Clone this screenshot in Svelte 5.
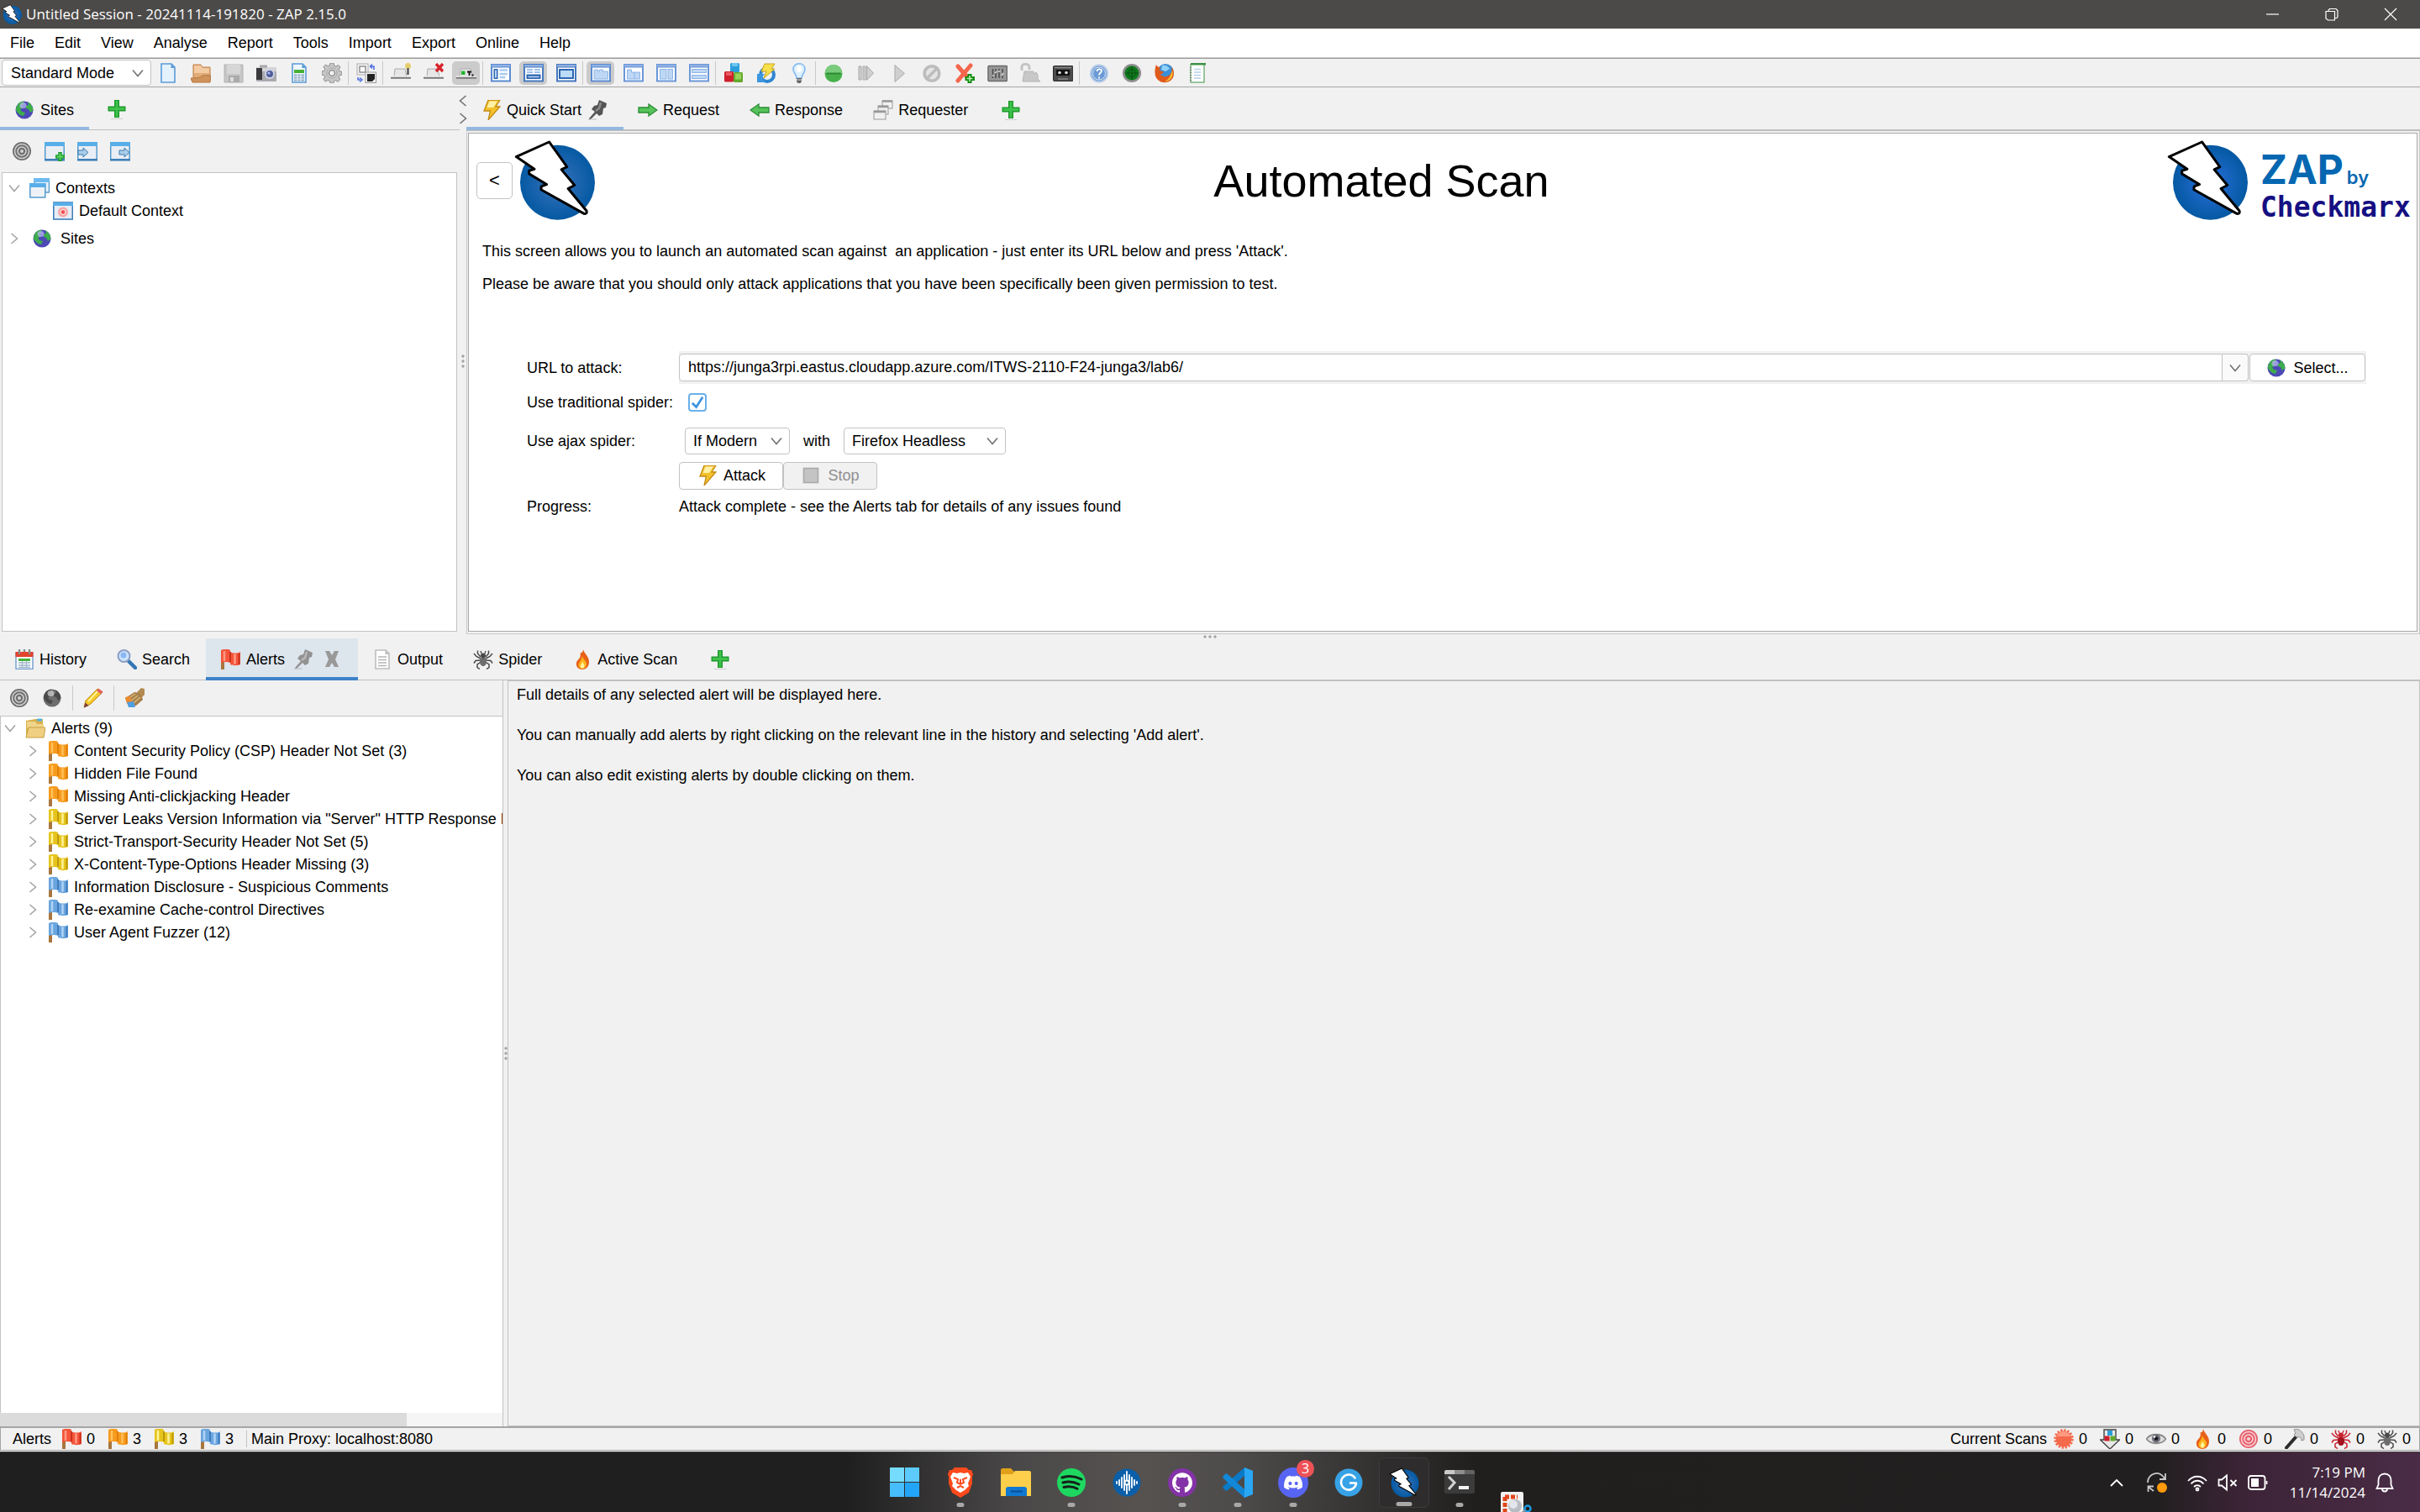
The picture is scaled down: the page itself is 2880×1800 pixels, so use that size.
<script>
  const menus = ['File', 'Edit', 'View', 'Analyse', 'Report', 'Tools', 'Import', 'Export', 'Online', 'Help'];

  const frame = (dark, inner) =>
    `<rect x="0" y="1" width="24" height="21.500" fill="${dark}"/><rect x="1" y="2" width="22" height="2.500" fill="#8fb0e4"/><rect x="2" y="5.500" width="20" height="15" fill="#fff"/>${inner}`;
  const pale = 'fill="#bdd7f5" stroke="#8db4e6"';
  const flag = (base, light, dark) =>
    `<path d="M1 12h4v12H1z" fill="#a8763e"/><path d="M1 1c4-1.500 8-1.500 11 0v2c3 2 9 2 12 0v15c-3 1.600-9 1.600-12 0v-2c-3-1.500-7-1.500-11 0z" fill="${base}"/><path d="M5 2v12M17.500 5.500v12" stroke="${light}" stroke-width="2.500" fill="none"/><path d="M12 3v12M22.500 5v13" stroke="${dark}" stroke-width="1.800" fill="none"/>`;
  const target = (a, b) =>
    `<circle cx="12" cy="12" r="11" fill="${a}"/><circle cx="12" cy="12" r="8.500" fill="none" stroke="${b}" stroke-width="1.500"/><circle cx="12" cy="12" r="5" fill="none" stroke="${b}" stroke-width="1.600"/><circle cx="12" cy="12" r="2" fill="${b}"/>`;
  const spider = (c, d) =>
    `<g fill="none" stroke="${c}" stroke-width="1.500"><path d="M9 9 5.500 5V1.500M15 9l3.500-4V1.500M9 11 4 8.500 1 5M15 11l5-2.500L23 5M9 13l-6 .5-2 3M15 13l6 .5 2 3M9.500 15 5 18v3.500l3 2M14.500 15l4.500 3v3.500l-3 2"/></g><ellipse cx="12" cy="14.500" rx="4" ry="5.500" fill="${d}"/><circle cx="12" cy="7.500" r="3" fill="${c}"/><path d="M10 5 9 2M14 5l1-3" stroke="${c}" stroke-width="1.300"/>`;
  const pin = (c, d) =>
    `<path d="M14 0l9 4-1 5-3 1-1 7-4 2-3-3-7 7-2 .5.500-2L9 14 5 11l3-4 4-1z" fill="${c}"/><path d="M16 3l-2 7-4 3" stroke="${d}" stroke-width="2.500" fill="none"/><path d="M1 23h10" stroke="#bbb"/>`;
  const globe = (sea, land, glow) =>
    `<circle cx="12" cy="12" r="10.500" fill="${sea}"/><path d="M2.500 8.500C4 4.500 7 2 10.500 1.600L12 4 9 7l1 3-3 1 2 3 4 1-2 4-4-1-4-4C1.500 12 2 10 2.500 8.500zM16 2.500c4 2 6.500 6 6.400 10L19 15l-2-4-3-1V7l3-1z" fill="${land}"/><ellipse cx="10.500" cy="6.500" rx="4" ry="3.500" fill="${glow}" opacity=".75"/>`;
  const doc = (edge, fill) =>
    `<path d="M4 1h12l4 4v18H4z" fill="${fill}" stroke="${edge}" stroke-width="1.600"/><path d="M15.500 1v5H20" fill="${edge}"/>`;
  const hat = (extra) =>
    `<path d="M5 7h12l2 10H4z" fill="#e6e6e6" stroke="#aaa"/><path d="M0 17.500h24" stroke="#777" stroke-width="2.500"/><path d="M0 16h24" stroke="#eee" stroke-width="1.500"/>${extra}`;
  const win = (extra) =>
    `<rect x=".7" y="2.500" width="22.500" height="20" fill="#e9eef5" stroke="#4b94c9" stroke-width="1.400"/><rect y="1" width="24" height="5" fill="#58aee8"/><rect y="21" width="24" height="2.500" fill="#3f80b8"/>${extra}`;
  const bolt = `<path d="M9 0h14l-5 8h5L9 24l2.500-11H4L6 8z" fill="#f3c22b" stroke="#c58a17" stroke-width="1.300"/><path d="M10.500 1.500h9.500L15 9H7.500z" fill="#fff2a8"/>`;
  const flame = `<path d="M13 0c1 5 7 8 7 15 0 6-4 9-8 9s-8-3-7-8c.5-3 3-4 4-6 1-2 1-4 .5-6C11 5 13 3 13 0z" fill="#e8611a"/><path d="M12 7c0 5 5 6 5 10 0 4-2.500 6-5 6s-5-2-4.500-5c.5-2.500 4-5 4.500-11z" fill="#ffb31c"/><path d="M12.500 14c0 3 2 3 2 5.500 0 2-1 3-2.500 3s-2.500-1.500-2-3.500c.3-1.500 2-2.500 2.500-5z" fill="#fff5a0"/>`;
  const cubes = `<rect x="8" y="0" width="11" height="11" rx="1.500" fill="#2b9fdb"/><rect x="10" y="0" width="7" height="4" fill="#6cc5f0"/><rect x="1" y="10" width="11" height="12.500" rx="1.500" fill="#cf1f2c"/><rect x="3" y="11" width="7" height="4" fill="#ea5a62"/><rect x="12" y="11" width="11" height="12" rx="1.500" fill="#63a92c"/><rect x="14" y="12.500" width="7" height="7" fill="#9ad35c"/>`;

  const icons = {
    doc: doc('#5c9bd5', '#e4f2ff'),
    folder: `<path d="M3 2h9l2 3h9v14H3z" fill="#e2ab77" stroke="#c08049"/><path d="M4 3h8l2 3h8v6H4z" fill="#f3cba3"/><path d="M0 18c5 0 11 0 14-3 3-.5 6-.5 10 0l-1 8H2z" fill="#cf945c" stroke="#b4763f"/>`,
    save: `<path d="M1 2h22v21H1z" fill="#c6c6c6" stroke="#b2b2b2"/><rect x="4" y="2" width="16" height="11" fill="#d6d6d6"/><rect x="6" y="15" width="13" height="8" fill="#aaa"/><rect x="8" y="17" width="4" height="5" fill="#ddd"/>`,
    camera: `<rect x="0" y="5" width="24" height="17" rx="1" fill="#a9a9b0"/><path d="M0 5h24v5H0z" fill="#d4d4d8"/><path d="M0 6h7v14H0z" fill="#3a3a3e"/><rect x="4" y="2.500" width="9" height="3" fill="#a8a8a8"/><circle cx="16" cy="13" r="6" fill="#d0d3e6"/><circle cx="16" cy="13" r="4" fill="#4f5c99"/><circle cx="15" cy="12" r="1.600" fill="#aab8ef"/>`,
    report: doc('#5c9bd5', '#eef6ff') + `<rect x="6" y="8" width="12" height="4" fill="#45b035"/><path d="M6 14.500h12M6 17.500h12M6 20.500h12" stroke="#8fa9c0" stroke-width="1.800"/><path d="M10 12v10M14 12v10" stroke="#eef6ff"/>`,
    gear: `<path d="M10 0h4l.8 3.200 2 .9L19.700 2.400 22 5l-1.800 2.800.9 2L24 10.500v3.500l-3 .8-.9 2 1.700 3L19 22.300l-2.600-1.700-2 .9L14 24h-4l-.8-2.700-2-.9-2.900 1.700L2 19.500l1.700-2.700-.9-2L0 14v-4l2.800-.8.9-2L2 4.500 4.500 2l2.700 1.700 2-.9z" fill="#c6c6c6" stroke="#8c8c8c"/><circle cx="12" cy="12" r="6" fill="#dcdcdc" stroke="#a0a0a0"/><circle cx="12" cy="12" r="3.500" fill="#f1f1f1" stroke="#8c8c8c" stroke-width="1.600"/>`,
    persist: `<rect x="1" y="1" width="13" height="13" fill="#f7f7f7" stroke="#aaa"/><rect x="4" y="4" width="7" height="7" fill="#fff" stroke="#888" stroke-width="1.400"/><rect x="11" y="11" width="12.500" height="12.500" fill="#f4f4f4" stroke="#999"/><path d="M13 13h9v6l-3 3h-6z" fill="#222"/><path d="M17 4h4v4M19 1.500l-2.500 2.500L19 6.500M1.500 20H5M4 17.500l3 2.500-3 2.500M2 17v3" stroke="#4a6be0" stroke-width="1.500" fill="none"/>`,
    hatpin: hat(`<circle cx="20.500" cy="3.500" r="3.500" fill="#e8cd6b"/><path d="M20.500 6v8" stroke="#555" stroke-width="2.500"/>`),
    hatx: hat(`<path d="M15 1l8 9M23 1l-8 9" stroke="#d8242c" stroke-width="3.400"/>`),
    hatgreen: hat(`<rect x="6" y="9.500" width="4.500" height="4.500" fill="#22b52e"/><path d="M13 10.500h5M15.500 10.500V15M18.500 14.500h2" stroke="#111" stroke-width="1.800"/>`),
    lay1: frame('#5b8bd0', `<rect x="3.500" y="7" width="5" height="12" fill="#2f67b1"/><rect x="5" y="8.500" width="2" height="9" fill="#b9d7f5"/><path d="M10.500 8.500h9.500M10.500 13h9.500M10.500 17h7" stroke="#a8cbef" stroke-width="2.500"/>`),
    lay2: frame('#4678bf', `<path d="M4 8h7M13 8h7M4 11h7M13 11h7" stroke="#9fc3ec" stroke-width="2"/><rect x="3.500" y="13.500" width="17" height="5.500" fill="#2f67b1"/><path d="M5.500 16.500h13" stroke="#b9d7f5" stroke-width="1.500"/>`),
    lay3: frame('#4678bf', `<rect x="4" y="8" width="16" height="10" fill="#bcdcf8" stroke="#2f67b1" stroke-width="2"/>`),
    tab1: frame('#5b8bd0', `<path d="M4 8h4.500v2h2V8h4v2h6v9H4z" ${pale}/>`),
    tab2: frame('#6a97d8', `<path d="M4.500 8h5v3h10v8h-15z" ${pale}/><path d="M13 11v8" stroke="#8db4e6"/>`),
    tab3: frame('#6a97d8', `<rect x="4.500" y="7.500" width="7.500" height="11.500" ${pale}/><rect x="14" y="7.500" width="5.500" height="11.500" ${pale}/>`),
    tab4: frame('#6a97d8', `<rect x="3.500" y="7.500" width="17" height="4" ${pale}/><rect x="3.500" y="14.500" width="17" height="4" ${pale}/>`),
    cubes,
    update: `<circle cx="13" cy="14" r="8" fill="none" stroke="#2f86d2" stroke-width="4"/><path d="M1 13h9l-3 4 3 6H1z" fill="#3c97e0"/><path d="M10 1h12l-4 6h4L9 18l3-8H6z" fill="#f7e04a" stroke="#c7a21e"/>`,
    bulb: `<path d="M12 .8c4.500 0 7 3 7 6.700 0 4.500-4 5.500-4 10.500H9c0-5-4-6-4-10.500C5 3.800 7.500.8 12 .8z" fill="#dff0ff" stroke="#7fb7f0" stroke-width="1.600"/><ellipse cx="12" cy="7" rx="3" ry="4" fill="#fff"/><path d="M9 18h6v4l-1.500 2h-3L9 22z" fill="#666"/><path d="M9 20h6" stroke="#ddd"/>`,
    green: `<circle cx="12" cy="12.500" r="10.500" fill="#47b04a"/><path d="M2 12a10 10 0 0 1 20 0z" fill="#7acb7c"/><path d="M3.500 12.500h17" stroke="#2d8a35" stroke-width="2"/>`,
    step: `<path d="M3 4h3v16H3zM8 4h3v16H8zM12.500 3.500l8 8.500-8 8.500z" fill="#cfcfcf" stroke="#a9a9a9"/>`,
    play: `<path d="M7 2.500 18.500 12.500 7 22.500z" fill="#cfcfcf" stroke="#a9a9a9"/>`,
    block: `<circle cx="12" cy="12.500" r="8.800" fill="#e4e4e4" stroke="#bcbcbc" stroke-width="3.600"/><path d="M6 18.500l12-12" stroke="#bcbcbc" stroke-width="3.400"/>`,
    crossadd: `<path d="M4 4l14 16M19 3 4 21" stroke="#f4664c" stroke-width="5" stroke-linecap="round"/><path d="M18 13v11M12.500 18.500H24" stroke="#0e8c0e" stroke-width="5"/><path d="M18 15v7M14.500 18.500h7" stroke="#b6efb0" stroke-width="1.600"/>`,
    mixer: `<rect x="1" y="3.500" width="22.500" height="18" rx="1" fill="#989898" stroke="#6a6a6a" stroke-width="1.500"/><path d="M6.500 7v11M10 7v11M14 7v11M18 7v11" stroke="#4a4a4a" stroke-width="1.500"/><path d="M6 15h2M9 12l2-2M12.500 10h3M17 15l2-3" stroke="#ddd" stroke-width="1.600"/>`,
    lock: `<path d="M2 9V5c0-5 9-5 9 0v3" fill="none" stroke="#c4c4c4" stroke-width="3"/><path d="M5 10h11v3l3-2 2 3v5l3 3H3z" fill="#c8c8c8" stroke="#b5b5b5"/>`,
    tape: `<rect x=".5" y="3.500" width="23.500" height="18" rx="1" fill="#4b4b4b" stroke="#2c2c2c"/><rect x="4" y="8" width="16" height="7" fill="#111"/><circle cx="8" cy="11.500" r="1.800" fill="#ddd"/><circle cx="16" cy="11.500" r="1.800" fill="#ddd"/><path d="M2 5.500h20M6 19h12" stroke="#888" stroke-width="1.500"/>`,
    help: `<circle cx="12" cy="12.500" r="10" fill="#6c9ad4" stroke="#b5cbe8" stroke-width="2"/><circle cx="12" cy="12.500" r="7.500" fill="#6b9ad6" stroke="#dbe8f8"/><path d="M9.500 10c0-3.500 5.500-3.500 5.500-.5 0 2-3 2-3 5M12 16.500v2" stroke="#fff" stroke-width="1.800" fill="none"/>`,
    radar: `<circle cx="12" cy="12" r="9.800" fill="#0e7a1c" stroke="#8f8f8f" stroke-width="2.600"/><path d="M12 4v16M4 12h16" stroke="#0a4f12"/><circle cx="12" cy="12" r="4.500" fill="none" stroke="#0a4f12"/>`,
    firefox: `<circle cx="13" cy="10.500" r="9.500" fill="#3a8fd9"/><path d="M9 3c4-1 8 1 9 4l-5 3-5-2z" fill="#8fd0f7"/><path d="M2 2c1 2 2 3 5 3l-1 3c1 2 3 2 5 2-1 3-3 3-4 3 2 4 8 4 11 1 3-3 3-7 2-10 4 5 4 12 0 16-5 5-13 4-17-1C-.5 15 0 7 2 2z" fill="#df5b1c"/><path d="M21 9c2 6-2 13-9 13 5-2 7-6 9-13z" fill="#f8c838"/>`,
    note: `<rect x="4" y="1.500" width="16" height="21.500" fill="#fff" stroke="#3c9143"/><rect x="4" y="0" width="18" height="2.500" fill="#3c9143"/><path d="M8 7.500h8M8 11h8M8 14.500h8M8 18h8" stroke="#b6cfe8" stroke-width="1.500"/><path d="M4 5v16" stroke="#777" stroke-width="2" stroke-dasharray="1 2"/>`,
    globe: globe('#4d49b5', '#3cae4a', '#b7b5f2'),
    globegray: globe('#6e6e6e', '#4a4a4a', '#cfcfcf'),
    plus: `<path d="M12 1v21M1.500 11.500h21" stroke="#1e9a2c" stroke-width="6"/><path d="M12 2v19M3 11.500h18" stroke="#3fc24c" stroke-width="3"/><path d="M5 23.500h14" stroke="#cfcfcf"/>`,
    bolt,
    pin: pin('#555', '#8b8b8b'),
    pinlight: pin('#929292', '#b9b9b9'),
    close: `<path d="M4 2h5l3 5 3-5h5l-4 10 4 9h-5l-3-5-3 5H4l4-9z" fill="#999"/>`,
    right: `<path d="M1 9h12V5l10 7-10 7v-4H1z" fill="#56c35b" stroke="#2a8d33" stroke-width="1.300"/>`,
    left: `<path d="M23 9H11V5L1 12l10 7v-4h12z" fill="#56c35b" stroke="#2a8d33" stroke-width="1.300"/>`,
    stack: `<g fill="#f0f0f0" stroke="#9a9a9a"><rect x="11" y="1" width="12" height="9"/><rect x="6" y="7" width="12" height="10"/><rect x="1" y="13" width="14" height="10"/></g><path d="M11 1.500h12M6 8h12M1 14h14" stroke="#999" stroke-width="2.400"/>`,
    targetgray: target('#6f6f6f', '#d2d2d2'),
    targetred: target('#e4606c', '#fcd5d8'),
    winadd: win(`<path d="M18.500 13v11M13 18.500h11" stroke="#1a9a2a" stroke-width="4.500"/><path d="M18.500 14.500v8M14.500 18.500h8" stroke="#5fd565" stroke-width="1.800"/>`),
    winin: win(`<path d="M1 11h6V8l6 5.500L7 19v-3H1z" fill="#a9cdea" stroke="#3c79aa"/>`),
    winout: win(`<path d="M11 11h6V8l6 5.500-6 5.500v-3h-6z" fill="#a9cdea" stroke="#3c79aa"/>`),
    contexts: `<rect x="6" y="1" width="17.500" height="16" fill="#e8f1fa" stroke="#4b94c9" stroke-width="1.400"/><rect x="5.500" y="0" width="18.500" height="5" fill="#6cbaf0"/><rect x=".8" y="7" width="18" height="16" fill="#eef2f7" stroke="#4b94c9" stroke-width="1.400"/><rect y="6" width="19.500" height="5" fill="#58aee8"/>`,
    context: `<rect x=".8" y="2" width="22.500" height="20" fill="#e8edf5" stroke="#3f7fb8" stroke-width="1.600"/><rect y="2" width="24" height="4" fill="#58aee8"/><circle cx="12" cy="13.500" r="6" fill="#f8a6a6"/><circle cx="12" cy="13.500" r="3" fill="#ef5555" stroke="#fff"/>`,
    history: `<rect x="2" y="4" width="20" height="19.500" fill="#fbfdff" stroke="#6f9ccb" stroke-width="1.400"/><rect x="1.500" y="3" width="21" height="6" fill="#e3432d"/><path d="M6 0v6M12 0v3M18 0v6" stroke="#8a8a8a" stroke-width="2.400"/><rect x="5" y="11" width="14" height="3" fill="#46b13a"/><path d="M5 16h14M5 19h14M5 21.500h14" stroke="#9fb4cb" stroke-width="1.400"/><path d="M9.500 14v8M14.500 14v8" stroke="#9fb4cb"/>`,
    search: `<path d="M13 13l9 9" stroke="#3577b5" stroke-width="4.500" stroke-linecap="round"/><circle cx="8.500" cy="8" r="7" fill="#cfe4fb" stroke="#8c9fc4" stroke-width="2"/><circle cx="8" cy="7" r="3.500" fill="#8ab8f5"/>`,
    output: doc('#bdbdbd', '#fff') + `<path d="M7 9h10M7 12.500h10M7 16h10M7 19.500h10" stroke="#b5b5b5" stroke-width="1.400"/>`,
    spider: spider('#4a4a4a', '#6d6d6d'),
    spiderred: spider('#c9202e', '#a3121f'),
    flame,
    pencil: `<path d="M1 23l2-8L17 1l6 4L9 19z" fill="#f5c927" stroke="#b98a1b"/><path d="M6 16 18 3" stroke="#fff09a" stroke-width="2"/><path d="M18 .5l5.500 4-2 3-5.500-4z" fill="#e06060"/><path d="M1 23.500l1.500-6 4 3.500z" fill="#7a3b3b"/>`,
    broom: `<path d="M15 5 20 0l4 1v7l-5 5z" fill="#b28a52"/><path d="M1 12l11-7c5 0 9 4 10 9l-8 7-9 1z" fill="#a78049"/><path d="M4 13l9-6M7 16l9-7M11 18l8-7" stroke="#d9b97c" stroke-width="1.500"/><path d="M1 11l6-1 2 7-6 2z" fill="#f08a2c"/><path d="M3 17l8-1 2 7H5z" fill="#4f9de0"/>`,
    dir: `<path d="M1 3l11-2h9v21H1z" fill="#d8b04a"/><path d="M14 .5h6v3h-6z" fill="#55b0e8"/><path d="M2 4h10l2 3h8v5H2z" fill="#f0d48a"/><path d="M1 23 4 11h20l-2 12z" fill="#efd083" stroke="#c79f3e"/>`,
    red: flag('#f4543a', '#ff9a85', '#c5301c'),
    orange: flag('#f79b1e', '#ffc15c', '#dd7d08'),
    yellow: flag('#e6c41d', '#fff39a', '#b8940b'),
    blue: flag('#6aa5df', '#b1d4f5', '#3b78b8'),
    burst: `<circle cx="12" cy="12" r="9.500" fill="#f4694b"/><circle cx="12" cy="12" r="10" fill="none" stroke="#f4694b" stroke-width="3.500" stroke-dasharray="2.300 1.620"/><path d="M4 9a8.500 8.500 0 0 1 16 0z" fill="#ff9a80"/>`,
    cubedown: `<path d="M5 1h14v12h4.500L12 24 .5 13H5z" fill="#e8e8e8" stroke="#444" stroke-width="1.400"/><rect x="9" y="2" width="6" height="6" fill="#2b9fdb"/><rect x="5.500" y="8.500" width="6" height="6" fill="#cf1f2c"/><rect x="12.500" y="8.500" width="6" height="6" fill="#63a92c"/>`,
    eye: `<path d="M.5 12C5 5 19 5 23.500 12 19 19 5 19 .5 12z" fill="#ddd" stroke="#8a8a8a" stroke-width="1.800"/><circle cx="12" cy="11.500" r="5" fill="#6b6b78"/><circle cx="12" cy="11.500" r="2.300" fill="#16161c"/><circle cx="10" cy="9.500" r="1.300" fill="#fff"/>`,
    hammer: `<path d="M13 10 2 22.500" stroke="#2c2c2c" stroke-width="4" stroke-linecap="round"/><path d="M11 1c5-2 9 1 12 7v5l-3 1c0-4-3-5-6-4l-3-3 2-2z" fill="#cfcfcf" stroke="#8f8f8f"/>`,
    stop: `<rect x="3.500" y="3.500" width="17" height="17" fill="#c4c4c4" stroke="#aaa" stroke-width="1.600"/>`,
  };

  const toolbar = [
    [['doc', 'New Session'], ['folder', 'Open Session'], ['save', 'Persist Session'], ['camera', 'Snapshot Session'], ['report', 'Generate Report'], ['gear', 'Options']],
    [['persist', 'Session Properties']],
    [['hatpin', 'Show Tab Names'], ['hatx', 'Hide Unpinned Tabs'], ['hatgreen', 'Show Tab Icons', true]],
    [['lay1', 'Expand Sites'], ['lay2', 'Expand Information', true], ['lay3', 'Full Layout']],
    [['tab1', 'Tabs Layout', true], ['tab2', 'Tabs Layout Two'], ['tab3', 'Side by Side'], ['tab4', 'Above']],
    [['cubes', 'Manage Add-ons'], ['update', 'Check for Updates'], ['bulb', 'Show Tips']],
    [['green', 'Set Break'], ['step', 'Step'], ['play', 'Continue'], ['block', 'Drop'], ['crossadd', 'Add Break Point'], ['mixer', 'Scan Policy'], ['lock', 'Forced User Mode'], ['tape', 'Record Script']],
    [['help', 'Help'], ['radar', 'HUD'], ['firefox', 'Open Browser'], ['note', 'Notes']],
  ];

  const alerts = [
    ['orange', 'Content Security Policy (CSP) Header Not Set (3)'],
    ['orange', 'Hidden File Found'],
    ['orange', 'Missing Anti-clickjacking Header'],
    ['yellow', 'Server Leaks Version Information via "Server" HTTP Response Header Field (3)'],
    ['yellow', 'Strict-Transport-Security Header Not Set (5)'],
    ['yellow', 'X-Content-Type-Options Header Missing (3)'],
    ['blue', 'Information Disclosure - Suspicious Comments'],
    ['blue', 'Re-examine Cache-control Directives'],
    ['blue', 'User Agent Fuzzer (12)'],
  ];

  const alertCounts = [['red', 0], ['orange', 3], ['yellow', 3], ['blue', 3]];
  const scans = ['burst', 'cubedown', 'eye', 'flame', 'targetred', 'hammer', 'spiderred', 'spider'];

  const apps = [
    { name: 'Start', state: '', art: `<path d="M0 0h17v17H0z" fill="#76dcfd"/><path d="M18 0h17v17H18z" fill="#5ccbfc"/><path d="M0 18h17v17H0z" fill="#47bdfb"/><path d="M18 18h17v17H18z" fill="#23a5f7"/>` },
    { name: 'Brave', state: 'open', art: `<path d="M11 0h14l3 3 3 0 2 5-1 3 0 8-4 11-10 6-10-6-4-11 0-8-1-3 2-5 3 0z" fill="#fb4a1c"/><path d="M9 6l5 1 4-1 4 1 5-1 3 5-3 8 1 3-5 5-5 3-5-3-5-5 1-3-3-8z" fill="#fff"/><path d="M10 12l5 2-1 4 4 2 4-2-1-4 5-2M14 24l4-2 4 2M18 14v6" stroke="#fb4a1c" stroke-width="2" fill="none"/>` },
    { name: 'File Explorer', state: '', art: `<path d="M0 3c0-1 1-2 2-2h10l4 4v6H0z" fill="#e0a01a"/><path d="M0 8h14l3-4h17c1 0 2 1 2 2v28H0z" fill="#fdcf4b"/><path d="M6 34V26c0-2 1-3 3-3h19c2 0 3 1 3 3v8z" fill="#0f78d0"/><path d="M12 28.500h14" stroke="#0a4f94" stroke-width="2"/>` },
    { name: 'Spotify', state: 'open', art: `<circle cx="18" cy="18" r="17" fill="#1ed760"/><path d="M7 12c8-2.500 16-1.500 23 2M8 18c7-2 13-1.200 19 2M9 23.500c6-1.500 11-1 16 1.800" fill="none" stroke="#14201a" stroke-width="3" stroke-linecap="round"/>` },
    { name: 'Podcasts', state: '', art: `<circle cx="18" cy="18" r="16.500" fill="#0a5fa8"/><path d="M6 17v2M9 15v6M12 12v12M15 9v18M18 5v26M21 9v18M24 12v12M27 15v6M30 17v2" stroke="#fff" stroke-width="1.800" stroke-linecap="round"/><circle cx="18" cy="18" r="3.500" fill="#fff"/><circle cx="18" cy="18" r="1.500" fill="#0a5fa8"/>` },
    { name: 'GitHub Desktop', state: 'open', art: `<circle cx="18" cy="18" r="17" fill="#8432a8"/><g transform="translate(6 6)"><path fill="#fff" d="M12 .297c-6.630 0-12 5.373-12 12 0 5.303 3.438 9.800 8.205 11.385.6.113.82-.258.82-.577 0-.285-.01-1.040-.015-2.040-3.338.724-4.042-1.610-4.042-1.610C4.422 18.070 3.633 17.700 3.633 17.700c-1.087-.744.084-.729.084-.729 1.205.084 1.838 1.236 1.838 1.236 1.070 1.835 2.809 1.305 3.495.998.108-.776.417-1.305.76-1.605-2.665-.3-5.466-1.332-5.466-5.930 0-1.310.465-2.380 1.235-3.220-.135-.303-.54-1.523.105-3.176 0 0 1.005-.322 3.300 1.230.96-.267 1.980-.399 3-.405 1.020.006 2.040.138 3 .405 2.280-1.552 3.285-1.230 3.285-1.230.645 1.653.24 2.873.12 3.176.765.840 1.230 1.910 1.230 3.220 0 4.610-2.805 5.625-5.475 5.920.42.360.81 1.096.81 2.220 0 1.606-.015 2.896-.015 3.286 0 .315.210.690.825.570C20.565 22.092 24 17.592 24 12.297c0-6.627-5.373-12-12-12"/></g>` },
    { name: 'Visual Studio Code', state: 'open', art: `<path d="M26 0 1 22c-1 1-1 2 0 3l2 2c1 1 2 1 3 0L26 10z" fill="#0a7ac6"/><path d="M26 36 1 13c-1-1-1-2 0-3l2-2c1-1 2-1 3 0l20 18z" fill="#1289d8"/><path d="M26 0l10 4v28l-10 4z" fill="#2aa7f4"/>` },
    { name: 'Discord', state: 'open', badge: '3', art: `<circle cx="18" cy="18" r="18" fill="#5865f2"/><g transform="translate(7 7)"><path fill="#fff" transform="scale(.92)" d="M20.317 4.370a19.791 19.791 0 0 0-4.885-1.515.074.074 0 0 0-.079.037c-.211.375-.445.865-.608 1.250-1.845-.276-3.680-.276-5.487 0-.164-.393-.406-.874-.618-1.250a.077.077 0 0 0-.079-.037 19.736 19.736 0 0 0-4.885 1.515.07.07 0 0 0-.032.028C.533 9.046-.319 13.580.099 18.058a.082.082 0 0 0 .031.056c2.053 1.508 4.041 2.423 5.993 3.029a.078.078 0 0 0 .084-.028c.462-.63.873-1.295 1.226-1.994a.076.076 0 0 0-.042-.106c-.653-.248-1.274-.55-1.872-.892l.364-.419a.074.074 0 0 1 .078-.011c3.928 1.793 8.180 1.793 12.061 0l.451.302c-.598.35-1.220.645-1.880.999.36.698.772 1.363 1.225 1.993 1.961-.578 4.034-1.493 6.087-3.001.5-5.177-.838-9.674-3.549-13.660zM8.020 15.331c-1.183 0-2.157-1.086-2.157-2.419 0-1.333.956-2.419 2.157-2.419 1.211 0 2.176 1.095 2.157 2.419 0 1.333-.956 2.419-2.157 2.419zm7.975 0c-1.183 0-2.157-1.086-2.157-2.419 0-1.333.955-2.419 2.157-2.419 1.211 0 2.176 1.095 2.157 2.419 0 1.333-.946 2.419-2.157 2.419z"/></g>` },
    { name: 'Grammarly', state: '', art: `<circle cx="18" cy="18" r="16.500" fill="#37a3e6"/><path d="M25.500 12.500A9 9 0 1 0 27 18.500h-7" fill="none" stroke="#fff" stroke-width="2.600" stroke-linecap="round" stroke-linejoin="round"/>` },
    { name: 'ZAP', state: 'active', art: '' },
    { name: 'Terminal', state: 'open', art: `<rect y="3" width="36" height="28" rx="2" fill="#3b3b3b"/><path d="M2 3h10v5H0V5c0-1 1-2 2-2z" fill="#c9c9c9"/><path d="M12 3h12v5H12z" fill="#8f8f8f"/><path d="M24 3h10c1 0 2 1 2 2v3H24z" fill="#626262"/><path d="M5 11l7 7-7 8" fill="none" stroke="#d2d2d2" stroke-width="3"/><rect x="17" y="22" width="12" height="4" fill="#f4f4f4"/>` },
    { name: 'Snipping Tool', state: 'low', art: `<rect x="1" y="0" width="27" height="30" rx="2" fill="#f1f1f1"/><path d="M6 6v18M6 6h15" fill="none" stroke="#e0461b" stroke-width="5" stroke-dasharray="5 2"/><circle cx="18" cy="17" r="8" fill="#b9bcc2"/><circle cx="16" cy="15" r="5" fill="#e3e6ea"/><circle cx="33" cy="20" r="3.500" fill="none" stroke="#1a9be0" stroke-width="2.500"/><path d="M30 22l-5 4" stroke="#8b98a4" stroke-width="2.500"/>` },
  ];

  let url = $state('https://junga3rpi.eastus.cloudapp.azure.com/ITWS-2110-F24-junga3/lab6/');
  let traditional = $state(true);
</script>

{#snippet icon(name)}
  <svg class="icon" viewBox="0 0 24 24" aria-hidden="true">{@html icons[name]}</svg>
{/snippet}

{#snippet zap(kind)}
  <svg class="zap {kind}" viewBox="178 80 292 292" aria-hidden="true">
    <defs>
      <radialGradient id="zap-{kind}"><stop offset="0" stop-color={kind === 'brand' ? '#2a6fdc' : '#3a74bd'} /><stop offset="1" stop-color="#0459a2" /></radialGradient>
    </defs>
    <circle cx="333" cy="234" r="134" fill="url(#zap-{kind})" />
    <path d="M303 89 367 178 347 188 394 244 371 256 437 336Q440 348 428 346L274 260 275 248 294 241 231 203V192L250 186 185 142Z" fill="#fff" stroke="#000" stroke-width="9" stroke-linejoin="round" />
  </svg>
{/snippet}

{#snippet chevron(dir)}
  <svg class="chevron {dir}" viewBox="0 0 16 16" aria-hidden="true"><path d="M2 4.500 8 11.500 14 4.500" /></svg>
{/snippet}

<div class="screen">
  <header class="titlebar">
    {@render zap('tiny')}
    <span class="caption">Untitled Session - 20241114-191820 - ZAP 2.15.0</span>
    <button aria-label="Minimize"><svg viewBox="0 0 16 16"><path d="M0 8h15" /></svg></button>
    <button aria-label="Restore"><svg viewBox="0 0 16 16"><path d="M1 4.500h10.500V15H3.500L1 13zM4 4V3l1.500-1.500H13L15 3.500V11l-1 1.500h-2" /></svg></button>
    <button aria-label="Close"><svg viewBox="0 0 16 16"><path d="M1 1l14 14M15 1 1 15" /></svg></button>
  </header>

  <nav class="menubar">
    {#each menus as menu}<button>{menu}</button>{/each}
  </nav>

  <div class="toolbar" role="toolbar" aria-label="Main toolbar">
    <div class="combo mode">
      <select aria-label="Mode"><option>Standard Mode</option></select>
      {@render chevron('down')}
    </div>
    {#each toolbar as group}
      <div class="group">
        {#each group as [name, label, on]}
          <button class:on aria-label={label}>{@render icon(name)}</button>
        {/each}
      </div>
    {/each}
  </div>

  <section class="upper">
    <div class="sites">
      <div class="tabs">
        <button class="tab selected">{@render icon('globe')}Sites</button>
        <button class="tab add" aria-label="Add tab">{@render icon('plus')}</button>
      </div>
      <div class="tools">
        <button aria-label="Show only in scope">{@render icon('targetgray')}</button>
        <button aria-label="New context">{@render icon('winadd')}</button>
        <button aria-label="Import context">{@render icon('winin')}</button>
        <button aria-label="Export context">{@render icon('winout')}</button>
      </div>
      <ul class="tree">
        <li>{@render chevron('down')}{@render icon('contexts')}Contexts</li>
        <li class="child">{@render icon('context')}Default Context</li>
        <li class="site">{@render chevron('right')}{@render icon('globe')}Sites</li>
      </ul>
    </div>

    <div class="splitter">
      <div class="arrows">{@render chevron('left')}{@render chevron('right')}</div>
      <span class="grip"></span>
    </div>

    <div class="work">
      <div class="tabs">
        <button class="tab selected">{@render icon('bolt')}Quick Start{@render icon('pin')}</button>
        <button class="tab">{@render icon('right')}Request</button>
        <button class="tab">{@render icon('left')}Response</button>
        <button class="tab">{@render icon('stack')}Requester</button>
        <button class="tab add" aria-label="Add tab">{@render icon('plus')}</button>
      </div>
      <div class="panel">
        <main class="quick">
          <div class="banner">
            <button class="back" aria-label="Back">&lt;</button>
            {@render zap('plain')}
            <h1>Automated Scan</h1>
            {@render zap('brand')}
            <div class="brandname">
              <span class="zapword">ZAP<small>by</small></span>
              <span class="company">Checkmarx</span>
            </div>
          </div>
          <p>This screen allows you to launch an automated scan against&nbsp; an application - just enter its URL below and press 'Attack'.</p>
          <p>Please be aware that you should only attack applications that you have been specifically been given permission to test.</p>

          <form class="form" onsubmit={(e) => e.preventDefault()}>
            <label for="url">URL to attack:</label>
            <div class="urlrow">
              <input id="url" type="text" bind:value={url} />
              <button type="button" class="drop" aria-label="URL history">{@render chevron('down')}</button>
              <button type="button" class="btn select">{@render icon('globe')}Select...</button>
            </div>

            <label for="traditional">Use traditional spider:</label>
            <div class="check">
              <input id="traditional" type="checkbox" bind:checked={traditional} />
              {#if traditional}<svg viewBox="0 0 16 16" aria-hidden="true"><path d="M3.500 8.500 7 12 12.500 3.500" /></svg>{/if}
            </div>

            <label for="ajax">Use ajax spider:</label>
            <div class="ajax">
              <div class="combo modern"><select id="ajax"><option>If Modern</option></select>{@render chevron('down')}</div>
              <label for="browser">with</label>
              <div class="combo browser"><select id="browser"><option>Firefox Headless</option></select>{@render chevron('down')}</div>
            </div>

            <div class="actions">
              <button type="submit" class="btn attack">{@render icon('bolt')}Attack</button>
              <button type="button" class="btn halt" disabled>{@render icon('stop')}Stop</button>
            </div>

            <span>Progress:</span>
            <output>Attack complete - see the Alerts tab for details of any issues found</output>
          </form>
        </main>
      </div>
    </div>
  </section>

  <div class="hsplit"><span class="grip flat"></span></div>

  <section class="lower">
    <div class="tabs info">
      <button class="tab">{@render icon('history')}History</button>
      <button class="tab">{@render icon('search')}Search</button>
      <button class="tab focused">{@render icon('red')}Alerts{@render icon('pinlight')}{@render icon('close')}</button>
      <button class="tab">{@render icon('output')}Output</button>
      <button class="tab">{@render icon('spider')}Spider</button>
      <button class="tab">{@render icon('flame')}Active Scan</button>
      <button class="tab add" aria-label="Add tab">{@render icon('plus')}</button>
    </div>
    <div class="alertpane">
      <div class="alertlist">
        <div class="tools">
          <button aria-label="Only in scope">{@render icon('targetgray')}</button>
          <button aria-label="Link with sites">{@render icon('globegray')}</button>
          <i></i>
          <button aria-label="Edit alert">{@render icon('pencil')}</button>
          <i></i>
          <button aria-label="Delete all alerts">{@render icon('broom')}</button>
        </div>
        <ul class="tree">
          <li>{@render chevron('down')}{@render icon('dir')}Alerts (9)</li>
          {#each alerts as [risk, label]}
            <li class="child">{@render chevron('right')}{@render icon(risk)}{label}</li>
          {/each}
        </ul>
        <div class="scroll"><span></span></div>
      </div>
      <div class="splitter"><span class="grip"></span></div>
      <div class="details">
        <p>Full details of any selected alert will be displayed here.</p>
        <p>You can manually add alerts by right clicking on the relevant line in the history and selecting 'Add alert'.</p>
        <p>You can also edit existing alerts by double clicking on them.</p>
      </div>
    </div>
  </section>

  <footer class="status">
    <span class="lead">Alerts</span>
    {#each alertCounts as [risk, count]}<span class="count">{@render icon(risk)}{count}</span>{/each}
    <span class="proxy">Main Proxy: localhost:8080</span>
    <span class="scans">Current Scans</span>
    {#each scans as scan}<span class="count">{@render icon(scan)}0</span>{/each}
  </footer>

  <div class="taskbar">
    <div class="apps">
      {#each apps as app}
        <button class="app {app.state}" aria-label={app.name}>
          {#if app.art}
            <svg viewBox="0 0 36 36" aria-hidden="true">{@html app.art}</svg>
          {:else}
            {@render zap('task')}
          {/if}
          {#if app.badge}<span class="badge">{app.badge}</span>{/if}
        </button>
      {/each}
    </div>
    <div class="tray">
      <svg class="hidden" viewBox="0 0 24 24"><path d="M5 16 12 9l7 7" /></svg>
      <svg class="sync" viewBox="0 0 24 24"><path d="M1 12A10.500 10.500 0 0 1 21 7M22 1v7h-7M8 22 1.500 17M1.500 23v-6.500h6.500" /><circle cx="18" cy="18" r="6" /></svg>
      <svg viewBox="0 0 24 24"><path d="M1 10c6-7 16-7 22 0M4.500 13.500c4.500-5 10.500-5 15 0M8 17c2.500-2.500 5.500-2.500 8 0" /><circle cx="12" cy="20" r="1.500" /></svg>
      <svg viewBox="0 0 24 24"><path d="M1.500 8.500v7H5l6 5v-17l-6 5zM15.500 9l7 7M22.500 9l-7 7" /></svg>
      <svg class="battery" viewBox="0 0 24 24"><rect x="1" y="4" width="19.500" height="16" rx="3" /><path d="M22.500 10v4" /><path class="charge" d="M4 7h9v10H4z" /></svg>
      <div class="clock"><span>7:19 PM</span><span>11/14/2024</span></div>
      <svg viewBox="0 0 24 24"><path d="M12 1.500c-5 0-7.500 3.500-7.500 8v5L2.500 19h19l-2-4.500v-5c0-4.500-2.500-8-7.500-8zM9 19.500c0 4 6 4 6 0" /></svg>
    </div>
  </div>
</div>

<style>
  :global(body) {
    margin: 0;
    background: #f1f1f1;
  }
  .screen {
    min-height: 100vh;
    display: flex;
    flex-direction: column;
    background: #f1f1f1;
    color: #000;
    font: 18px/20px 'Liberation Sans', Arial, sans-serif;
    white-space: nowrap;
  }
  .screen *, .screen *::before, .screen *::after { box-sizing: border-box; }
  button, select, input {
    font: inherit;
    color: inherit;
    margin: 0;
    padding: 0;
    border: 0;
    background: none;
  }
  ul, p, h1 { margin: 0; padding: 0; list-style: none; font-weight: 400; }
  svg { flex: none; display: block; }
  .icon { width: 24px; height: 24px; }
  .chevron { width: 16px; height: 16px; fill: none; stroke: #6e6e6e; stroke-width: 1.5; }
  .chevron.right { rotate: -90deg; }
  .chevron.left { rotate: 90deg; }

  .titlebar {
    height: 34px;
    display: flex;
    align-items: center;
    background: #4c4a48;
    color: #fff;
    padding-left: 2px;
    font-family: 'Open Sans', 'Noto Sans', sans-serif;
    font-size: 17px;
  }
  .titlebar .caption { flex: 1; padding-left: 5px; }
  .titlebar button { width: 70px; height: 34px; display: grid; place-items: center; }
  .titlebar button svg { width: 16px; height: 16px; fill: none; stroke: #fff; stroke-width: 1.2; }
  .zap.tiny { width: 24px; height: 24px; }
  .zap.plain, .zap.brand { width: 97px; height: 97px; }

  .menubar { height: 35px; display: flex; background: #fff; border-bottom: 1px solid #ccc; }
  .menubar button { padding: 0 12px; }

  .toolbar {
    height: 35px;
    display: flex;
    align-items: center;
    padding-left: 2px;
    border-top: 1px solid #999;
    border-bottom: 1px solid #a5a5a5;
  }
  .group { display: flex; }
  .group + .group { border-left: 1px solid #c9c9c9; padding-left: 1px; }
  .group:last-child { padding-left: 3px; }
  .group button { width: 33px; height: 28px; margin: 0 3px; border-radius: 5px; display: grid; place-items: center; }
  .group .on { background: #cbcbcb; }

  .combo { display: grid; align-items: center; height: 32px; background: #fff; border: 1px solid #c2c2c2; border-radius: 4px; }
  .combo select, .combo :global(.chevron) { grid-area: 1 / 1; }
  .combo :global(.chevron) { justify-self: end; margin-right: 7px; pointer-events: none; }
  .combo select { appearance: none; height: 100%; padding: 0 9px; }
  .mode { width: 178px; height: 31px; }
  .mode select { padding: 0 10px; }

  .upper {
    flex: 651 1 0;
    min-height: 0;
    display: grid;
    grid-template-columns: 547fr 8px 2325fr;
  }
  .sites, .work { display: flex; flex-direction: column; min-width: 0; }
  .tabs { display: flex; height: 51px; border-bottom: 1px solid #c0c0c0; flex: none; }
  .tab { display: flex; align-items: center; gap: 6px; padding: 0 19px 0 17px; height: 51px; }
  .sites .tab { padding: 2px 18px 0 17px; gap: 7px; }
  .tab.selected { box-shadow: inset 0 -4px #95b8df; }
  .sites .tab.add { padding-left: 21px; }
  .tab.add { padding: 0 20px; }
  .tools { display: flex; align-items: center; }
  .tools button { width: 39px; display: grid; place-items: center; }
  .sites .tools { height: 50px; padding-left: 6px; }
  .tree { background: #fff; border: 1px solid #c2c2c2; overflow: hidden; flex: 1; }
  .tree li { display: flex; align-items: center; height: 27px; gap: 7px; padding-left: 4px; }
  .tree :global(.chevron) { stroke: #a2a2a2; margin-right: 3px; }
  .sites .tree { margin: 0 3px 3px 2px; padding-top: 4px; }
  .sites .tree li { padding-left: 6px; }
  .sites .tree .child { padding-left: 60px; }
  .sites .tree .site { height: 40px; gap: 10px; }

  .splitter { display: flex; flex-direction: column; align-items: center; justify-content: center; min-width: 0; }
  .upper .splitter { justify-content: space-between; }
  .upper .splitter::after { content: ''; height: 45px; }
  .arrows { display: flex; flex-direction: column; align-items: center; gap: 5px; padding-top: 8px; }
  .grip { width: 4px; height: 18px; background: radial-gradient(circle, #a5a5a5 40%, transparent 50%) 0 0 / 4px 6px; }
  .grip.flat { width: 18px; height: 4px; background-size: 6px 4px; }
  .hsplit { height: 5px; flex: none; display: grid; place-items: center; }

  .work .tabs { border-bottom: 2px solid #bdbdbd; height: 52px; }
  .work .tab { padding-top: 2px; }
  .work .tab.selected { gap: 7px; }
  .panel { flex: 1; border: 1px solid #c9c9c9; border-top: 0; padding: 2px 2px 2px 1px; display: grid; }
  .quick { background: #fff; border: 1px solid #a8a8a8; padding: 7px 8px 0 9px; }
  .banner { display: flex; align-items: center; height: 97px; }
  .back { width: 43px; height: 44px; border: 1px solid #c2c2c2; border-radius: 5px; margin-right: 2px; font-size: 22px; }
  h1 { flex: 1; text-align: center; font-size: 54px; line-height: 60px; }
  .brandname { width: 192px; padding: 14px 0 0 14px; display: flex; flex-direction: column; }
  .zapword { font: 700 48px/42px Inter, sans-serif; color: #0667b1; }
  .zapword small { font-size: 22px; font-weight: 600; margin-left: 4px; }
  .company { font: 700 33px/30px 'DejaVu Sans Mono', monospace; color: #151082; }
  .quick > p { padding-left: 7px; margin-bottom: 19px; }
  .banner + p { margin-top: 26px; }

  .form {
    margin: 70px 52px 0 60px;
    display: grid;
    grid-template-columns: 181px minmax(0, 1fr);
    grid-template-rows: 39px 43px 49px 34px 39px;
    align-items: center;
  }
  .urlrow { display: flex; align-items: center; height: 39px; padding-right: 1px; background: #f1f1f1; }
  .urlrow input { flex: 1; min-width: 0; height: 33px; padding: 0 10px; background: #fff; border: 1px solid #c2c2c2; border-radius: 4px 0 0 4px; }
  .drop { width: 31px; height: 33px; display: grid; place-items: center; background: #fafafa; border: 1px solid #c2c2c2; border-left: 0; border-radius: 0 4px 4px 0; }
  .btn { display: flex; align-items: center; justify-content: center; gap: 8px; height: 33px; background: #fff; border: 1px solid #c2c2c2; border-radius: 4px; }
  .select { width: 138px; margin-left: 1px; }
  .check { display: grid; width: 22px; height: 22px; margin-left: 11px; }
  .check input, .check svg { grid-area: 1 / 1; }
  .check input { appearance: none; width: 22px; height: 22px; border: 2px solid #6bb0ea; border-radius: 4px; background: #fff; }
  .check svg { pointer-events: none; fill: none; stroke: #3f95e4; stroke-width: 2; z-index: 1; }
  .ajax { display: flex; align-items: center; gap: 16px; padding-left: 7px; }
  .modern { width: 125px; }
  .browser { width: 193px; }
  .actions { grid-column: 2; display: flex; }
  .attack { width: 124px; }
  .halt { width: 112px; background: #f1f1f1; color: #8e8e8e; }

  .lower { flex: 938 1 0; min-height: 0; display: flex; flex-direction: column; }
  .info { height: 50px; }
  .info .tab { height: 50px; }
  .info .focused { background: #dde5ed; box-shadow: inset 0 -4px #3c83c8; }
  .focused :global(.icon + .icon) { margin-left: 3px; }
  .focused { gap: 7px; }
  .alertpane { flex: 1; min-height: 0; display: grid; grid-template-columns: 599fr 5px 2276fr; }
  .alertlist { display: flex; flex-direction: column; min-width: 0; border-right: 1px solid #c2c2c2; }
  .alertlist .tools { height: 42px; padding-left: 3px; }
  .tools i { width: 1px; height: 30px; background: #cbcbcb; margin: 0 4px 0 5px; }
  .alertlist .tree { border-right: 0; border-bottom: 0; }
  .alertlist .tree li { padding-left: 3px; }
  .alertlist .tree .child { padding-left: 30px; }
  .scroll { height: 16px; background: #f5f5f5; flex: none; }
  .scroll span { display: block; width: 81%; height: 100%; background: #dbdbdb; }
  .details { border: 1px solid #c2c2c2; padding: 6px 10px; }
  .details p { margin-bottom: 28px; }

  .status {
    height: 29px;
    flex: none;
    display: flex;
    align-items: center;
    padding: 0 9px 0 14px;
    border: 1px solid #a5a5a5;
    border-top-width: 2px;
    margin-bottom: 1px;
  }
  .lead { margin-right: 12px; }
  .count { display: flex; align-items: center; gap: 6px; width: 55px; }
  .proxy { border-left: 1px solid #c2c2c2; padding-left: 5px; flex: 1; }
  .scans { margin-right: 8px; }
  .status .count:last-child { width: 41px; }

  .taskbar {
    height: 72px;
    flex: none;
    display: grid;
    grid-template-columns: 1fr auto 1fr;
    border-top: 1px solid #4a4848;
    background: linear-gradient(90deg, #201f1f 0 35%, #4a4848 42%, #555250 47%, #4e4c4b 51%, #211f1e 61%, #211f1f 89%, #3d2438 93%, #4a2c46 100%);
    color: #fff;
    font-family: 'Open Sans', 'Noto Sans', sans-serif;
  }
  .apps { grid-column: 2; display: flex; align-items: center; }
  .app { position: relative; width: 60px; height: 60px; margin: 0 3px; border-radius: 6px; display: grid; place-items: center; }
  .app svg { width: 36px; height: 36px; overflow: visible; }
  .app.active { background: #2e2c2c; border: 1px solid #3c3a3a; }
  .app.open::after, .app.active::after {
    content: '';
    position: absolute;
    bottom: 1px;
    left: 50%;
    translate: -50% 0;
    width: 9px;
    height: 5px;
    border-radius: 3px;
    background: #a8a8a8;
  }
  .app.active::after { width: 19px; }
  .app.low { align-self: end; height: 24px; place-items: start center; overflow: hidden; }
  .badge {
    position: absolute;
    top: 3px;
    right: 5px;
    width: 21px;
    height: 21px;
    border-radius: 50%;
    background: #ee5257;
    font-size: 16px;
    line-height: 20px;
  }
  .tray { display: flex; align-items: center; justify-content: flex-end; padding-right: 30px; }
  .tray svg { width: 24px; height: 24px; margin-right: 12px; fill: none; stroke: #fff; stroke-width: 1.8; }
  .tray .hidden { margin-right: 24px; }
  .tray .sync { margin-right: 24px; stroke: #c9c9c9; }
  .tray .sync circle { fill: #ff9a0a; stroke: none; }
  .tray .charge { fill: #fff; stroke: none; }
  .tray .battery { margin-right: 26px; }
  .tray svg:last-child { margin: 0 0 0 11px; }
  .clock { display: flex; flex-direction: column; text-align: right; font-size: 17px; line-height: 24px; }
</style>
